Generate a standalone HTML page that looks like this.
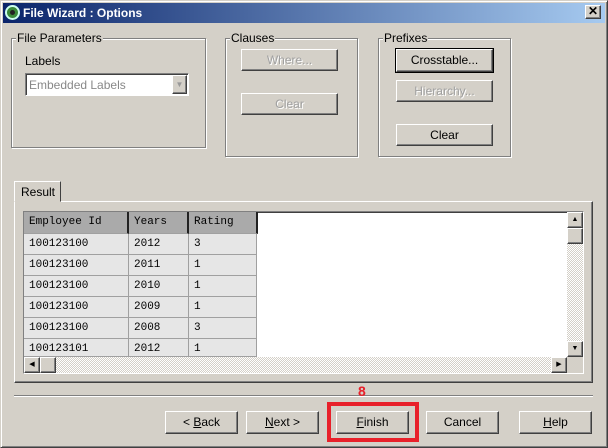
<!DOCTYPE html><html><head><style>
*{margin:0;padding:0;box-sizing:border-box}
body{width:608px;height:448px;background:#d4d0c8;font-family:"Liberation Sans",sans-serif;font-size:12px;position:relative;overflow:hidden;color:#000}
.a{position:absolute}
.win{left:0;top:0;width:608px;height:448px;border:1px solid;border-color:#d4d0c8 #404040 #404040 #d4d0c8;box-shadow:inset 1px 1px #fff,inset -1px -1px #808080}
.title{left:3px;top:3px;width:602px;height:20px;background:linear-gradient(90deg,#0a246a,#a6caf0);color:#fff;font-weight:bold;font-size:12px;line-height:20px;padding-left:20px}
.btn{position:absolute;background:#d4d0c8;border:1px solid;border-color:#fff #404040 #404040 #fff;box-shadow:inset -1px -1px #808080;text-align:center;font-size:12px}
.dis{color:#a0a0a0;text-shadow:1px 1px #fff}
.grp{position:absolute;border:1px solid #808080;box-shadow:1px 1px #fff,inset 1px 1px #fff}
.lg{position:absolute;top:-8px;left:4px;background:#d4d0c8;padding:0 1px;font-size:12px}
.cell{position:absolute;height:21px;border-right:1px solid #a0a0a0;border-bottom:1px solid #a0a0a0;background:#e6e6e6;font-family:"Liberation Mono",monospace;font-size:11px;line-height:21px;padding-left:5px}
.hd{background:#aaa;border-right:2px solid #222}
.chk{background-image:repeating-conic-gradient(#fff 0 25%,#d4d0c8 0 50%);background-size:2px 2px}
</style></head><body>
<div class="a win"></div>
<div class="a title">File Wizard : Options</div>
<div class="a" style="left:5px;top:5px;width:15px;height:15px;border-radius:50%;background:#3a8a3a;border:2px solid #cfe;"><div style="margin:3px;width:5px;height:5px;border-radius:50%;background:#222"></div></div>
<div class="btn" style="left:585px;top:5px;width:16px;height:14px;line-height:11px;font-weight:bold">✕</div>

<div class="grp" style="left:11px;top:38px;width:195px;height:110px"><span class="lg">File Parameters</span></div>
<div class="a" style="left:25px;top:54px">Labels</div>
<div class="a" style="left:25px;top:73px;width:164px;height:23px;background:#fff;border:1px solid;border-color:#808080 #fff #fff #808080;box-shadow:inset 1px 1px #404040;color:#888;padding:4px 3px">Embedded Labels</div>
<div class="btn" style="left:172px;top:75px;width:15px;height:19px;color:#999;font-size:8px;line-height:17px">▼</div>

<div class="grp" style="left:225px;top:38px;width:133px;height:119px"><span class="lg">Clauses</span></div>
<div class="btn dis" style="left:241px;top:49px;width:97px;height:22px;line-height:20px">Where...</div>
<div class="btn dis" style="left:241px;top:93px;width:97px;height:22px;line-height:20px">Clear</div>

<div class="grp" style="left:378px;top:38px;width:133px;height:119px"><span class="lg">Prefixes</span></div>
<div class="btn" style="left:396px;top:49px;width:97px;height:23px;line-height:20px;outline:1px solid #000">Crosstable...</div>
<div class="btn dis" style="left:396px;top:80px;width:97px;height:22px;line-height:20px">Hierarchy...</div>
<div class="btn" style="left:396px;top:124px;width:97px;height:22px;line-height:20px">Clear</div>

<div class="a" style="left:14px;top:201px;width:579px;height:182px;border:1px solid;border-color:#fff #404040 #404040 #fff;box-shadow:inset -1px -1px #808080"></div>
<div class="a" style="left:14px;top:181px;width:47px;height:21px;background:#d4d0c8;border:1px solid;border-color:#fff #404040 transparent #fff;padding:3px 0 0 6px">Result</div>

<div class="a" style="left:23px;top:211px;width:561px;height:163px;border:1px solid;border-color:#808080 #fff #fff #808080;box-shadow:inset 1px 1px #404040;background:#fff"></div>
<div class="cell hd" style="left:24px;top:212px;width:105px;height:22px">Employee Id</div>
<div class="cell hd" style="left:129px;top:212px;width:60px;height:22px">Years</div>
<div class="cell hd" style="left:189px;top:212px;width:69px;height:22px">Rating</div>
<div class="cell" style="left:24px;top:234px;width:105px">100123100</div><div class="cell" style="left:129px;top:234px;width:60px">2012</div><div class="cell" style="left:189px;top:234px;width:68px">3</div>
<div class="cell" style="left:24px;top:255px;width:105px">100123100</div><div class="cell" style="left:129px;top:255px;width:60px">2011</div><div class="cell" style="left:189px;top:255px;width:68px">1</div>
<div class="cell" style="left:24px;top:276px;width:105px">100123100</div><div class="cell" style="left:129px;top:276px;width:60px">2010</div><div class="cell" style="left:189px;top:276px;width:68px">1</div>
<div class="cell" style="left:24px;top:297px;width:105px">100123100</div><div class="cell" style="left:129px;top:297px;width:60px">2009</div><div class="cell" style="left:189px;top:297px;width:68px">1</div>
<div class="cell" style="left:24px;top:318px;width:105px">100123100</div><div class="cell" style="left:129px;top:318px;width:60px">2008</div><div class="cell" style="left:189px;top:318px;width:68px">3</div>
<div class="cell" style="left:24px;top:339px;width:105px;height:18px">100123101</div><div class="cell" style="left:129px;top:339px;width:60px;height:18px">2012</div><div class="cell" style="left:189px;top:339px;width:68px;height:18px">1</div>

<div class="a chk" style="left:24px;top:357px;width:543px;height:16px"></div>
<div class="btn" style="left:24px;top:357px;width:16px;height:16px;font-size:7px;line-height:14px">◀</div>
<div class="btn" style="left:40px;top:357px;width:16px;height:16px"></div>
<div class="btn" style="left:551px;top:357px;width:16px;height:16px;font-size:7px;line-height:14px">▶</div>
<div class="a chk" style="left:567px;top:212px;width:16px;height:145px"></div>
<div class="btn" style="left:567px;top:212px;width:16px;height:16px;font-size:7px;line-height:14px">▲</div>
<div class="btn" style="left:567px;top:228px;width:16px;height:16px"></div>
<div class="btn" style="left:567px;top:341px;width:16px;height:16px;font-size:7px;line-height:14px">▼</div>
<div class="a" style="left:567px;top:357px;width:16px;height:16px;background:#d4d0c8"></div>

<div class="a" style="left:14px;top:395px;width:579px;height:2px;border-top:1px solid #808080;border-bottom:1px solid #fff"></div>
<div class="a" style="left:358px;top:383px;color:#e8202a;font-weight:bold;font-size:14px">8</div>
<div class="btn" style="left:165px;top:411px;width:73px;height:23px;line-height:21px">&lt; <u>B</u>ack</div>
<div class="btn" style="left:246px;top:411px;width:73px;height:23px;line-height:21px"><u>N</u>ext &gt;</div>
<div class="btn" style="left:336px;top:411px;width:73px;height:23px;line-height:21px"><u>F</u>inish</div>
<div class="a" style="left:327px;top:402px;width:92px;height:40px;border:4px solid #e8202a"></div>
<div class="btn" style="left:426px;top:411px;width:73px;height:23px;line-height:21px">Cancel</div>
<div class="btn" style="left:519px;top:411px;width:73px;height:23px;line-height:21px"><u>H</u>elp</div>
</body></html>
